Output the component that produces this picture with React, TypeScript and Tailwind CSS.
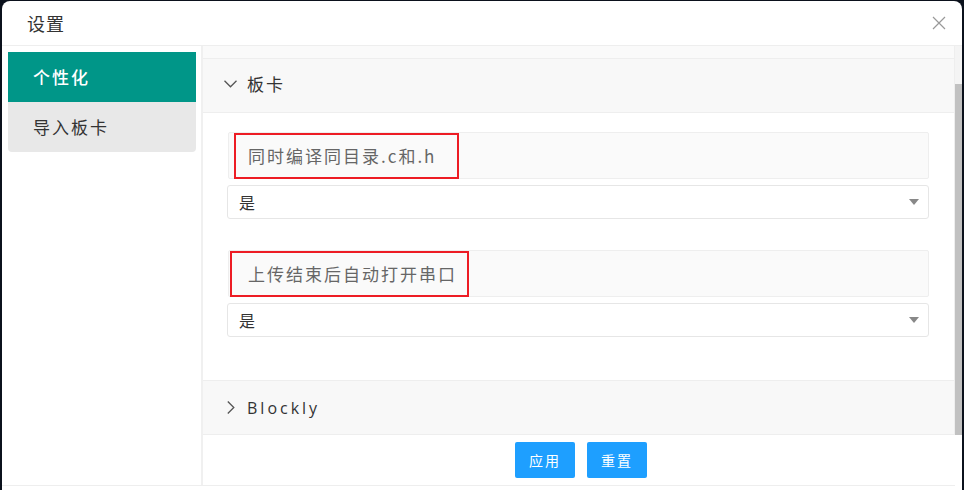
import React from 'react';

const cjk = "font-['Noto_Sans_CJK_SC','Noto_Sans',sans-serif]";

const Field: React.FC<{ label: string; markLeft: string; markWidth: string; textPad: string }> = ({ label, markLeft, markWidth, textPad }) => (
    <div>
        <div className="h-[47px] bg-[#fafafa] border border-[#eeeeee] rounded-[2px] flex items-center">
            <div className={`h-[46px] ${markLeft} ${markWidth} border-2 border-[#ed1c24] flex items-center ${textPad}`}>
                <span className="text-[17px] text-[#666] tracking-[2px] whitespace-nowrap">{label}</span>
            </div>
        </div>
        <div className="mt-[6px] h-[34px] border border-[#e6e6e6] rounded-[3px] bg-white flex items-center justify-between pl-[11px] pr-[9px] ml-[-1px]">
            <span className="text-[16px] text-[#333]">是</span>
            <svg width="10" height="6" viewBox="0 0 10 6">
                <path d="M0 0 L10 0 L5 6 Z" fill="#888" />
            </svg>
        </div>
    </div>
);

const App: React.FC = () => {
    return (
        <div className={`w-[964px] h-[490px] bg-[#0b111c] overflow-hidden ${cjk}`}>
            <div className="ml-[2px] mt-[1px] w-[960px] h-[489px] bg-white rounded-t-[8px] flex flex-col">
                {/* title */}
                <div className="h-[45px] border-b border-[#eeeeee] flex items-center justify-between pl-[25px] pr-[16px] shrink-0">
                    <span className="text-[18px] text-[#333] tracking-[1px]">设置</span>
                    <svg width="14" height="14" viewBox="0 0 14 14">
                        <path d="M1 1 L13 13 M13 1 L1 13" stroke="#999" strokeWidth="1.2" />
                    </svg>
                </div>

                {/* body */}
                <div className="flex h-[440px] border-b border-[#eeeeee] mr-[7px]">
                    {/* sidebar */}
                    <div className="w-[201px] shrink-0 border-r-2 border-[#f0f0f0] pl-[6px] pr-[5px] pt-[6px]">
                        <div className="h-[50px] bg-[#009688] text-white text-[17px] font-medium tracking-[2px] flex items-center pl-[25px]">
                            个性化
                        </div>
                        <div className="h-[50px] bg-[#e8e8e8] text-[#333] text-[17px] tracking-[2px] flex items-center pl-[25px] rounded-b-[4px]">
                            导入板卡
                        </div>
                    </div>

                    {/* right */}
                    <div className="flex-1 flex flex-col">
                        <div className="h-[389px] flex shrink-0 mr-[-7px]">
                            <div className="flex-1 border-r border-[#eeeeee] flex flex-col overflow-hidden">
                                <div className="h-[13px] bg-[#fafafa] border-b border-[#eeeeee] shrink-0" />
                                <div className="h-[54px] bg-[#f8f8f8] border-b border-[#eeeeee] flex items-center pl-[21px] pb-[3px] shrink-0">
                                    <svg width="13" height="8" viewBox="0 0 13 8" className="mr-[10px]">
                                        <path d="M0.5 0.8 L6.5 6.8 L12.5 0.8" stroke="#555" strokeWidth="1.3" fill="none" />
                                    </svg>
                                    <span className="text-[17px] text-[#333] tracking-[2px]">板卡</span>
                                </div>
                                <div className="h-[267px] shrink-0 px-[25px] pt-[19px] flex flex-col gap-[31px]">
                                    <Field label="同时编译同目录.c和.h" markLeft="ml-[5px]" markWidth="w-[225px]" textPad="pl-[12px]" />
                                    <Field label="上传结束后自动打开串口" markLeft="ml-[1px]" markWidth="w-[239px]" textPad="pl-[16px]" />
                                </div>
                                <div className="h-[55px] bg-[#f8f8f8] border-t border-b border-[#eeeeee] flex items-center pl-[24px] shrink-0">
                                    <svg width="8" height="13" viewBox="0 0 8 13" className="mr-[12px]">
                                        <path d="M0.8 0.5 L6.8 6.5 L0.8 12.5" stroke="#555" strokeWidth="1.3" fill="none" />
                                    </svg>
                                    <span className="text-[16px] text-[#333] tracking-[3px] font-['Open_Sans',sans-serif]">Blockly</span>
                                </div>
                            </div>
                            <div className="w-[7px] shrink-0 bg-[#f4f4f4] pt-[38px]">
                                <div className="h-full bg-[#c1c1c1]" />
                            </div>
                        </div>
                        <div className="flex-1 flex items-center justify-center gap-[12px] pl-[4px]">
                            <button className="w-[60px] h-[36px] bg-[#1e9fff] text-white text-[14px] tracking-[2px] rounded-[2px]">应用</button>
                            <button className="w-[60px] h-[36px] bg-[#1e9fff] text-white text-[14px] tracking-[2px] rounded-[2px]">重置</button>
                        </div>
                    </div>
                </div>
            </div>
        </div>
    );
};

export default App;
